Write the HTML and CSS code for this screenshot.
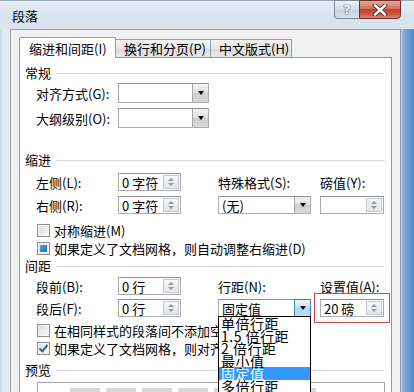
FILE: index.html
```html
<!DOCTYPE html>
<html lang="zh-CN">
<head>
    <meta charset="UTF-8">
    <title>段落</title>
    <link rel="stylesheet" href="styles.css">
</head>
<body>
    <div class="window">
        <div class="titlebar">
            <span class="title">段落</span>
            <div class="caption-btns">
                <span class="btn-help">?</span>
                <span class="btn-close">
                    <svg width="16" height="12" viewBox="0 0 16 12">
                        <path d="M3 1.5 L13 10.5 M13 1.5 L3 10.5" stroke="#5a2a25" stroke-width="4.2" stroke-linecap="square"/>
                        <path d="M3 1.5 L13 10.5 M13 1.5 L3 10.5" stroke="#fff" stroke-width="2.4" stroke-linecap="square"/>
                    </svg>
                </span>
            </div>
        </div>

        <div class="frame">
            <div class="client">
                <div class="tabs">
                    <div class="tab active">缩进和间距(I)</div>
                    <div class="tab">换行和分页(P)</div>
                    <div class="tab">中文版式(H)</div>
                </div>

                <div class="panel">
                    <!-- 常规 -->
                    <div class="group-title">常规</div>
                    <div class="row first">
                        <span class="label">对齐方式(G):</span>
                        <div class="combo wide"><span class="val"></span><span class="drop"></span></div>
                    </div>
                    <div class="row second">
                        <span class="label">大纲级别(O):</span>
                        <div class="combo wide"><span class="val"></span><span class="drop"></span></div>
                    </div>

                    <!-- 缩进 -->
                    <div class="group-title indent-title">缩进</div>
                    <div class="grid indent-grid">
                        <span class="label">左侧(L):</span>
                        <div class="spin"><span class="val">0 字符</span><span class="spin-btn"><i class="up"></i><i class="down"></i></span></div>
                        <span class="label small">特殊格式(S):</span>
                        <span class="label small">磅值(Y):</span>

                        <span class="label">右侧(R):</span>
                        <div class="spin"><span class="val">0 字符</span><span class="spin-btn"><i class="up"></i><i class="down"></i></span></div>
                        <div class="combo"><span class="val">(无)</span><span class="drop"></span></div>
                        <div class="spin wide-spin"><span class="val"></span><span class="spin-btn"><i class="up"></i><i class="down"></i></span></div>
                    </div>
                    <div class="check first-check"><span class="box"></span>对称缩进(M)</div>
                    <div class="check"><span class="box mixed"></span>如果定义了文档网格，则自动调整右缩进(D)</div>

                    <!-- 间距 -->
                    <div class="group-title spacing-title">间距</div>
                    <div class="grid spacing-grid">
                        <span class="label">段前(B):</span>
                        <div class="spin"><span class="val">0 行</span><span class="spin-btn"><i class="up"></i><i class="down"></i></span></div>
                        <span class="label small">行距(N):</span>
                        <span class="label small">设置值(A):</span>

                        <span class="label">段后(F):</span>
                        <div class="spin"><span class="val">0 行</span><span class="spin-btn"><i class="up"></i><i class="down"></i></span></div>
                        <div class="combo open">
                            <span class="val">固定值</span><span class="drop hot"></span>
                            <ul class="droplist">
                                <li>单倍行距</li>
                                <li>1.5 倍行距</li>
                                <li>2 倍行距</li>
                                <li>最小值</li>
                                <li class="selected">固定值</li>
                                <li>多倍行距</li>
                            </ul>
                        </div>
                        <div class="spin wide-spin marked"><span class="val">20 磅</span><span class="spin-btn"><i class="up"></i><i class="down"></i></span></div>
                    </div>
                    <div class="check first-check2"><span class="box"></span>在相同样式的段落间不添加空格(C)</div>
                    <div class="check"><span class="box checked"></span>如果定义了文档网格，则对齐到网格(W)</div>

                    <!-- 预览 -->
                    <div class="group-title preview-title">预览</div>
                    <div class="preview">
                        <div class="prev-line"><i></i><i></i><i></i><i></i><i></i><i></i><i></i></div>
                    </div>
                </div>
            </div>
        </div>
    </div>
</body>
</html>
```

FILE: styles.css
```css
body {
    margin: 0;
    width: 414px;
    height: 392px;
    overflow: hidden;
    font-family: "Noto Sans CJK SC", "Noto Sans", sans-serif;
    font-size: 13px;
    color: #000;
    background: #4b85c9;
}

.window {
    height: 392px;
    display: flex;
    flex-direction: column;
    background: linear-gradient(to right, #c6d3df 0, #dfe7ef 3px, #e4ebf2 9px, #dfe7ef 396px, #cddcea 400px, #7ea9d8 404px, #4f87c8 414px);
}

/* title bar */
.titlebar {
    height: 29px;
    flex: none;
    display: flex;
    justify-content: space-between;
    align-items: flex-start;
    background: linear-gradient(to bottom, #e6eef6, #d7e3ef 60%, #dbe5ef);
    border-top: 1px solid #9aa9b8;
    box-sizing: border-box;
}

.title {
    margin: 6px 0 0 12px;
    line-height: 18px;
}

.caption-btns {
    display: flex;
    margin-right: 13px;
    margin-top: -1px;
}

.btn-help {
    width: 25px;
    height: 19px;
    box-sizing: border-box;
    border: 1px solid #7d8a97;
    border-right: none;
    border-radius: 0 0 0 4px;
    background: linear-gradient(to bottom, #eef3f8, #d2dde8 50%, #c3d0dd 51%, #d6e1ec);
    text-align: center;
    font-family: "DejaVu Sans", sans-serif;
    font-weight: bold;
    font-size: 13px;
    line-height: 17px;
    color: #fff;
    text-shadow: 0 0 1px #3d4a57, 0 0 1px #3d4a57, 0 0 1px #3d4a57;
}

.btn-close {
    width: 42px;
    height: 19px;
    box-sizing: border-box;
    border: 1px solid #6e2f2a;
    border-radius: 0 0 4px 0;
    background: linear-gradient(to bottom, #e9a99b, #d5705e 45%, #c2412b 50%, #cf5a44 80%, #e08f6f);
    display: flex;
    align-items: center;
    justify-content: center;
}

/* window body */
.frame {
    flex: 1;
    display: flex;
    padding: 0 14px 0 10px;
}

.client {
    flex: 1;
    background: #f0f0f0;
    border: 1px solid #8e9eb0;
    border-bottom: none;
    padding: 7px 8px 0 8px;
}

/* tabs */
.tabs {
    display: flex;
    align-items: flex-end;
    height: 20px;
}

.tab {
    height: 18px;
    box-sizing: border-box;
    padding: 0 8px;
    line-height: 17px;
    border: 1px solid #959da7;
    border-bottom: none;
    border-left: none;
    background: linear-gradient(to bottom, #f3f3f3, #e6e6e6 50%, #dcdcdc 51%, #e8e8e8);
    white-space: nowrap;
}

.tab:nth-child(2) { width: 95px; }
.tab:nth-child(3) { width: 81px; }

.tab.active {
    width: 97px;
    height: 21px;
    margin-bottom: -1px;
    line-height: 22px;
    padding-left: 9px;
    border-left: 1px solid #959da7;
    border-radius: 2px 2px 0 0;
    background: #fff;
    position: relative;
    z-index: 1;
}

.panel {
    background: #fff;
    border: 1px solid #919b9c;
    border-bottom: none;
    height: 340px;
    padding: 8px 6px 0 5px;
    box-sizing: border-box;
}

/* group headers */
.group-title {
    display: flex;
    align-items: center;
    height: 14px;
    line-height: 14px;
}

.group-title::after {
    content: "";
    flex: 1;
    height: 1px;
    margin-left: 5px;
    background: #d5dce3;
}

.indent-title { margin-top: 25px; }
.spacing-title { margin-top: 3px; }
.preview-title { margin-top: 7px; }

.label {
    white-space: nowrap;
}

/* 常规 rows */
.row {
    display: flex;
    align-items: center;
    padding-left: 11px;
    height: 20px;
}

.row .label { width: 82px; }
.row.first { margin-top: 3px; }
.row.second { margin-top: 5px; }

/* indent / spacing grids */
.grid {
    display: grid;
    grid-template-columns: 82px 100px 102px 65px;
    grid-template-rows: 18px 18px;
    align-items: center;
    padding-left: 11px;
}

.indent-grid { margin-top: 6px; row-gap: 5px; }
.spacing-grid { margin-top: 4px; row-gap: 4px; }

/* controls */
.combo, .spin {
    position: relative;
    display: flex;
    align-items: stretch;
    height: 18px;
    box-sizing: border-box;
    border: 1px solid #abadb3;
    border-top-color: #8e9096;
    background: #fff;
}

.combo { width: 93px; }
.combo.wide { width: 91px; height: 20px; }
.spin { width: 63px; }
.spin.wide-spin { width: 64px; }

.val {
    flex: 1;
    padding-left: 3px;
    display: flex;
    align-items: center;
    white-space: nowrap;
}

.drop {
    width: 15px;
    border-left: 1px solid #a7a7a7;
    background: linear-gradient(to bottom, #f2f2f2, #e1e1e1 50%, #cfcfcf 51%, #dadada);
    display: flex;
    align-items: center;
    justify-content: center;
}

.drop::after {
    content: "";
    border-left: 3px solid transparent;
    border-right: 3px solid transparent;
    border-top: 4px solid #000;
}

.drop.hot {
    border: 1px solid #3c7fb1;
    margin: -1px -1px -1px 0;
    background: linear-gradient(to bottom, #eaf6fd, #bee6fd 50%, #a7d9f5 51%, #b6e0f7);
}

.spin-btn {
    width: 14px;
    margin: 1px 1px 1px 0;
    border: 1px solid #c6c9cf;
    background: linear-gradient(to bottom, #f6f6f6, #e4e4e4);
    display: flex;
    flex-direction: column;
    align-items: center;
    justify-content: center;
    gap: 2px;
}

.spin-btn i {
    border-left: 3px solid transparent;
    border-right: 3px solid transparent;
}

.spin-btn .up { border-bottom: 3px solid #8c9aa8; }
.spin-btn .down { border-top: 3px solid #8c9aa8; }

.marked {
    outline: 1px solid #d0434f;
    outline-offset: 5px;
}

/* dropdown list */
.droplist {
    position: absolute;
    top: 100%;
    left: -1px;
    width: 93px;
    margin: 0;
    padding: 0;
    list-style: none;
    background: #fff;
    border: 1px solid #000;
    box-sizing: border-box;
    z-index: 5;
    height: 80px;
}

.droplist li {
    height: 12.5px;
    line-height: 12.5px;
    font-size: 14px;
    padding-left: 2px;
    letter-spacing: 0.5px;
    white-space: nowrap;
}

.droplist li.selected {
    background: #3399ff;
    color: #fff;
}

/* checkboxes */
.check {
    display: flex;
    align-items: center;
    height: 16px;
    padding-left: 12px;
    margin-top: 2px;
    white-space: nowrap;
}

.check.first-check { margin-top: 8px; }
.check.first-check2 { margin-top: 5px; }

.box {
    width: 13px;
    height: 13px;
    box-sizing: border-box;
    border: 1px solid #8f8f8f;
    background: linear-gradient(135deg, #dcdcdc, #f8f8f8);
    box-shadow: inset 0 0 0 1px #f4f4f4;
    margin-right: 4px;
    position: relative;
}

.box.mixed::after {
    content: "";
    position: absolute;
    inset: 2px;
    background: linear-gradient(135deg, #59a9d8, #1d6ea9);
}

.box.checked::after {
    content: "";
    position: absolute;
    left: 3px;
    top: 0px;
    width: 3px;
    height: 7px;
    border-right: 2px solid #3b5c9c;
    border-bottom: 2px solid #3b5c9c;
    transform: rotate(40deg);
}

/* preview */
.preview {
    margin: 5px 0 0 12px;
    height: 20px;
    border: 1px solid #a8a8a8;
    border-bottom: none;
    background: #fff;
    padding: 5px 0 0 32px;
}

.prev-line {
    display: flex;
    gap: 6px;
}

.prev-line i {
    width: 30px;
    height: 4px;
    background: #d8d8d8;
}
```
